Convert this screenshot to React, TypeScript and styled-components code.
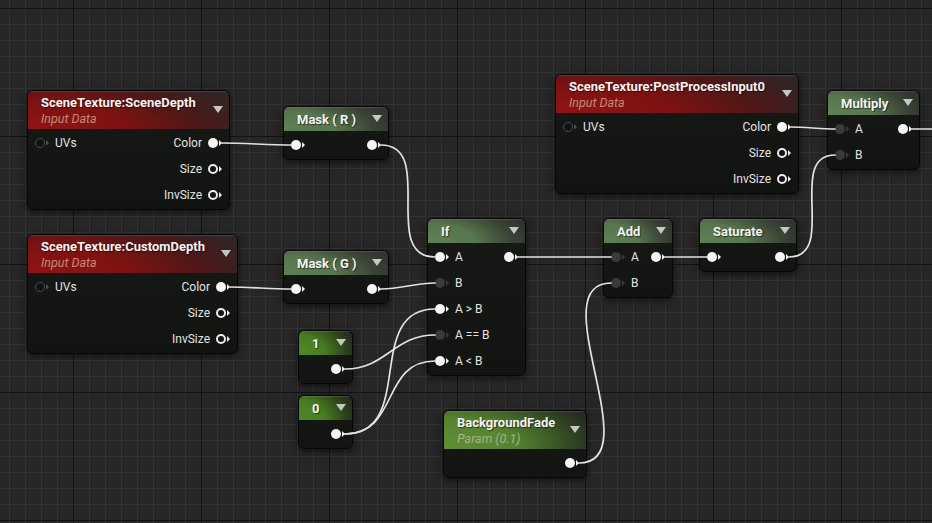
import React from 'react';
import styled, { createGlobalStyle } from 'styled-components';

type Kind = 'texture' | 'math' | 'constant' | 'param';
type PinState = 'filled' | 'ring' | 'dim' | 'dark';

interface PinDef {
  label?: string;
  state: PinState;
}

interface RowDef {
  in?: PinDef;
  out?: PinDef;
}

interface NodeDef {
  id: string;
  x: number;
  y: number;
  w: number;
  kind: Kind;
  title: string;
  sub?: string;
  rows: RowDef[];
}

const GlobalStyle = createGlobalStyle`
  html, body {
    margin: 0;
    padding: 0;
    background: #262626;
  }
  body {
    font-family: Roboto, "Noto Sans", "Liberation Sans", sans-serif;
  }
`;

const Canvas = styled.div`
  position: relative;
  width: 932px;
  height: 523px;
  overflow: hidden;
  background-color: #262626;
  background-image:
    linear-gradient(to right, #121212 1px, transparent 1px),
    linear-gradient(to bottom, #121212 1px, transparent 1px),
    linear-gradient(to right, #333333 1px, transparent 1px),
    linear-gradient(to bottom, #333333 1px, transparent 1px);
  background-size: 128px 128px, 128px 128px, 16px 16px, 16px 16px;
  background-position: 73px 8px, 73px 8px, 9px 8px, 9px 8px;
`;

const headerBg: Record<Kind, string> = {
  texture:
    'radial-gradient(ellipse 115% 170% at 0% 100%, #901414 0%, #7e1212 42%, #4c1818 74%, #2e2626 100%)',
  math:
    'radial-gradient(ellipse 110% 180% at 0% 100%, #5f8055 0%, #58764f 45%, #3a4536 78%, #2f322e 100%)',
  constant:
    'radial-gradient(ellipse 110% 180% at 0% 100%, #4f8a26 0%, #477d22 45%, #2c4419 80%, #242a20 100%)',
  param:
    'radial-gradient(ellipse 110% 160% at 0% 90%, #5f8e36 0%, #568330 45%, #334a22 80%, #262b22 100%)',
};

const subColor: Record<Kind, string> = {
  texture: '#c48a78',
  math: '#a8b8a0',
  constant: '#a8b8a0',
  param: '#a3b486',
};

const NodeBox = styled.div<{ $x: number; $y: number; $w: number }>`
  position: absolute;
  left: ${p => p.$x}px;
  top: ${p => p.$y}px;
  width: ${p => p.$w}px;
  box-sizing: border-box;
  border: 1px solid #060606;
  border-radius: 6px;
  background: linear-gradient(180deg, #171917 0%, #121412 100%);
  box-shadow: 0 2px 6px rgba(0, 0, 0, 0.6);
  overflow: hidden;
  z-index: 1;
`;

const Header = styled.div<{ $kind: Kind; $tall: boolean }>`
  position: relative;
  height: ${p => (p.$tall ? 38 : 24)}px;
  box-sizing: border-box;
  padding: ${p => (p.$tall ? '4px 30px 0 13px' : '0 30px 0 13px')};
  display: flex;
  flex-direction: column;
  justify-content: ${p => (p.$tall ? 'flex-start' : 'center')};
  background: ${p => headerBg[p.$kind]};
  box-shadow: inset 0 1px 0 rgba(255, 255, 255, 0.12);
`;

const Title = styled.div`
  font-size: 13px;
  font-weight: 700;
  line-height: 15px;
  color: #f2f2f2;
  white-space: nowrap;
  text-shadow: 1px 1px 1px rgba(0, 0, 0, 0.55);
`;

const Subtitle = styled.div<{ $kind: Kind }>`
  font-size: 12.5px;
  font-style: italic;
  line-height: 17px;
  color: ${p => subColor[p.$kind]};
  white-space: nowrap;
`;

const Dropdown = styled.span`
  position: absolute;
  right: 6px;
  top: 50%;
  margin-top: -4px;
  width: 0;
  height: 0;
  border-left: 5px solid transparent;
  border-right: 5px solid transparent;
  border-top: 7px solid #c6c6c6;
`;

const Body = styled.div`
  padding: 1px 0;
`;

const Row = styled.div`
  height: 26px;
  display: flex;
  align-items: center;
  justify-content: space-between;
`;

const Side = styled.div<{ $out?: boolean }>`
  display: flex;
  align-items: center;
  gap: 6px;
  padding: ${p => (p.$out ? '0 7px 0 0' : '0 0 0 7px')};
`;

const Label = styled.span`
  font-size: 12px;
  line-height: 14px;
  color: #e2e2e2;
  white-space: nowrap;
`;

const PinWrap = styled.span`
  display: inline-flex;
  align-items: center;
  width: 14px;
  height: 10px;
`;

const dotStyle: Record<PinState, string> = {
  filled: 'background: #f4f4f4;',
  ring: 'background: #141414; border: 2px solid #ececec;',
  dim: 'background: #121212; border: 1.5px solid #4c4c4c;',
  dark: 'background: #3a3a3a;',
};

const arrowColor: Record<PinState, string> = {
  filled: '#f4f4f4',
  ring: '#ececec',
  dim: '#4c4c4c',
  dark: '#3a3a3a',
};

const Dot = styled.span<{ $state: PinState }>`
  width: 10px;
  height: 10px;
  box-sizing: border-box;
  border-radius: 50%;
  ${p => dotStyle[p.$state]}
`;

const Arrow = styled.span<{ $state: PinState }>`
  margin-left: 1px;
  width: 0;
  height: 0;
  border-top: 3px solid transparent;
  border-bottom: 3px solid transparent;
  border-left: 3px solid ${p => arrowColor[p.$state]};
`;

const Wires = styled.svg`
  position: absolute;
  left: 0;
  top: 0;
  z-index: 2;
  pointer-events: none;
`;

const nodes: NodeDef[] = [
  {
    id: 'sceneDepth', x: 27, y: 90, w: 203, kind: 'texture',
    title: 'SceneTexture:SceneDepth', sub: 'Input Data',
    rows: [
      { in: { label: 'UVs', state: 'dim' }, out: { label: 'Color', state: 'filled' } },
      { out: { label: 'Size', state: 'ring' } },
      { out: { label: 'InvSize', state: 'ring' } },
    ],
  },
  {
    id: 'customDepth', x: 27, y: 234, w: 211, kind: 'texture',
    title: 'SceneTexture:CustomDepth', sub: 'Input Data',
    rows: [
      { in: { label: 'UVs', state: 'dim' }, out: { label: 'Color', state: 'filled' } },
      { out: { label: 'Size', state: 'ring' } },
      { out: { label: 'InvSize', state: 'ring' } },
    ],
  },
  {
    id: 'maskR', x: 283, y: 106, w: 106, kind: 'math', title: 'Mask ( R )',
    rows: [{ in: { state: 'filled' }, out: { state: 'filled' } }],
  },
  {
    id: 'maskG', x: 283, y: 250, w: 106, kind: 'math', title: 'Mask ( G )',
    rows: [{ in: { state: 'filled' }, out: { state: 'filled' } }],
  },
  {
    id: 'if', x: 427, y: 218, w: 99, kind: 'math', title: 'If',
    rows: [
      { in: { label: 'A', state: 'filled' }, out: { state: 'filled' } },
      { in: { label: 'B', state: 'dark' } },
      { in: { label: 'A > B', state: 'filled' } },
      { in: { label: 'A == B', state: 'dark' } },
      { in: { label: 'A < B', state: 'filled' } },
    ],
  },
  {
    id: 'add', x: 603, y: 218, w: 70, kind: 'math', title: 'Add',
    rows: [
      { in: { label: 'A', state: 'dark' }, out: { state: 'filled' } },
      { in: { label: 'B', state: 'dark' } },
    ],
  },
  {
    id: 'saturate', x: 699, y: 218, w: 98, kind: 'math', title: 'Saturate',
    rows: [{ in: { state: 'filled' }, out: { state: 'filled' } }],
  },
  {
    id: 'post', x: 555, y: 74, w: 244, kind: 'texture',
    title: 'SceneTexture:PostProcessInput0', sub: 'Input Data',
    rows: [
      { in: { label: 'UVs', state: 'dim' }, out: { label: 'Color', state: 'filled' } },
      { out: { label: 'Size', state: 'ring' } },
      { out: { label: 'InvSize', state: 'ring' } },
    ],
  },
  {
    id: 'multiply', x: 827, y: 90, w: 93, kind: 'math', title: 'Multiply',
    rows: [
      { in: { label: 'A', state: 'dark' }, out: { state: 'filled' } },
      { in: { label: 'B', state: 'dark' } },
    ],
  },
  {
    id: 'one', x: 298, y: 330, w: 55, kind: 'constant', title: '1',
    rows: [{ out: { state: 'filled' } }],
  },
  {
    id: 'zero', x: 298, y: 395, w: 55, kind: 'constant', title: '0',
    rows: [{ out: { state: 'filled' } }],
  },
  {
    id: 'fade', x: 443, y: 410, w: 144, kind: 'param',
    title: 'BackgroundFade', sub: 'Param (0.1)',
    rows: [{ out: { state: 'filled' } }],
  },
];

// [from node, output row, to node, input row]
const links: [string, number, string, number][] = [
  ['sceneDepth', 0, 'maskR', 0],
  ['customDepth', 0, 'maskG', 0],
  ['maskR', 0, 'if', 0],
  ['maskG', 0, 'if', 1],
  ['zero', 0, 'if', 2],
  ['one', 0, 'if', 3],
  ['zero', 0, 'if', 4],
  ['if', 0, 'add', 0],
  ['add', 0, 'saturate', 0],
  ['fade', 0, 'add', 1],
  ['saturate', 0, 'multiply', 1],
  ['post', 0, 'multiply', 0],
];

const byId = Object.fromEntries(nodes.map(n => [n.id, n]));

const rowY = (n: NodeDef, i: number) => n.y + (n.sub ? 39 : 25) + 14 + 26 * i;
const outX = (n: NodeDef) => n.x + n.w - 8;
const inX = (n: NodeDef) => n.x + 8;

// tangent like the engine's: horizontal delta plus vertical delta
function spline(x1: number, y1: number, x2: number, y2: number) {
  const k = (Math.abs(x2 - x1) + Math.abs(y2 - y1)) / 3;
  return `M${x1} ${y1} C${x1 + k} ${y1} ${x2 - k} ${y2} ${x2} ${y2}`;
}

function Pin({ state }: { state: PinState }) {
  return (
    <PinWrap>
      <Dot $state={state} />
      <Arrow $state={state} />
    </PinWrap>
  );
}

function GraphNode({ node }: { node: NodeDef }) {
  return (
    <NodeBox $x={node.x} $y={node.y} $w={node.w}>
      <Header $kind={node.kind} $tall={!!node.sub}>
        <Title>{node.title}</Title>
        {node.sub && <Subtitle $kind={node.kind}>{node.sub}</Subtitle>}
        <Dropdown />
      </Header>
      <Body>
        {node.rows.map((r, i) => (
          <Row key={i}>
            <Side>
              {r.in && <Pin state={r.in.state} />}
              {r.in?.label && <Label>{r.in.label}</Label>}
            </Side>
            <Side $out>
              {r.out?.label && <Label>{r.out.label}</Label>}
              {r.out && <Pin state={r.out.state} />}
            </Side>
          </Row>
        ))}
      </Body>
    </NodeBox>
  );
}

export default function App() {
  const mul = byId['multiply'];
  return (
    <>
      <GlobalStyle />
      <Canvas>
        {nodes.map(n => (
          <GraphNode key={n.id} node={n} />
        ))}
        <Wires width={932} height={523} viewBox="0 0 932 523">
          <g fill="none" stroke="#e2e2e2" strokeWidth={1.7} strokeLinecap="round">
            {links.map(([a, ai, b, bi], i) => {
              const from = byId[a];
              const to = byId[b];
              return (
                <path
                  key={i}
                  d={spline(outX(from), rowY(from, ai), inX(to), rowY(to, bi))}
                />
              );
            })}
            <path d={`M${outX(mul)} ${rowY(mul, 0)} L940 ${rowY(mul, 0)}`} />
          </g>
        </Wires>
      </Canvas>
    </>
  );
}
